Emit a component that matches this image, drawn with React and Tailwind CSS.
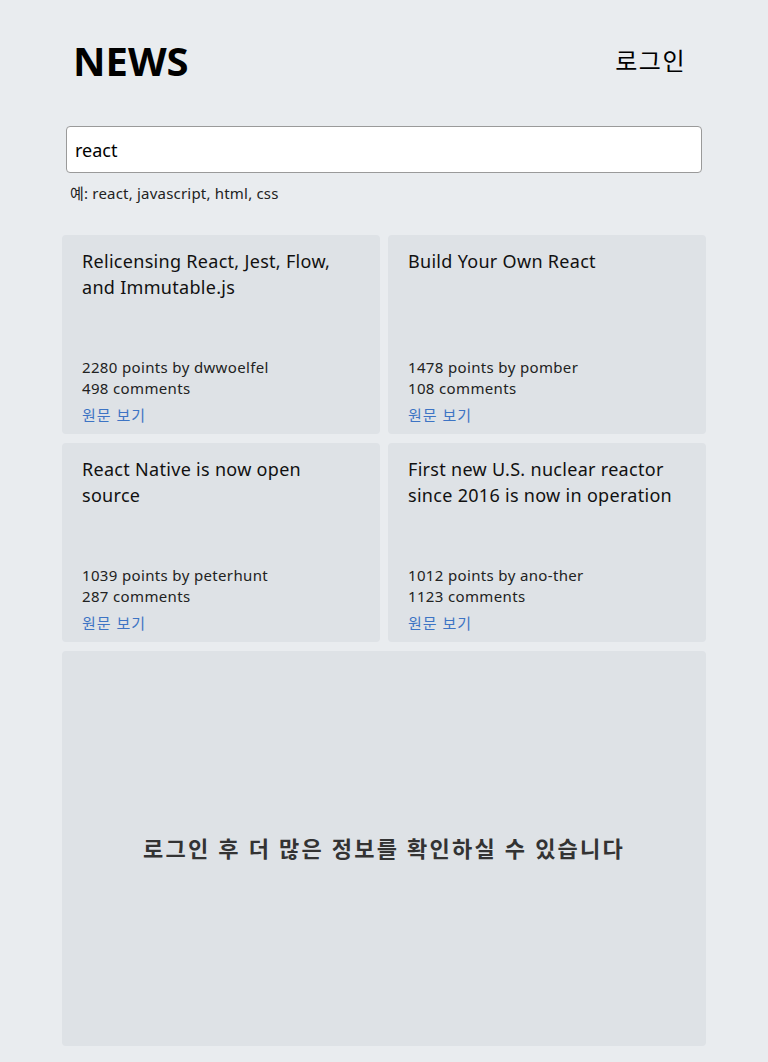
import { useState } from "react";

const articles = [
  {
    title: "Relicensing React, Jest, Flow, and Immutable.js",
    points: 2280,
    author: "dwwoelfel",
    comments: 498,
  },
  {
    title: "Build Your Own React",
    points: 1478,
    author: "pomber",
    comments: 108,
  },
  {
    title: "React Native is now open source",
    points: 1039,
    author: "peterhunt",
    comments: 287,
  },
  {
    title: "First new U.S. nuclear reactor since 2016 is now in operation",
    points: 1012,
    author: "ano-ther",
    comments: 1123,
  },
];

const font = {
  fontFamily: '"Noto Sans", "Noto Sans CJK KR", sans-serif',
};

const NewsCard = ({ item }) => (
  <div className="bg-[#dee2e6] rounded-[4px] h-[199px] px-5 pt-[13px] pb-[8px] flex flex-col justify-between">
    <h2 className="text-[18px] leading-[26px] tracking-[0.3px] text-[#111] pr-2">{item.title}</h2>
    <div className="text-[15px] leading-[21px] tracking-[0.35px] text-[#222]">
      <p>
        {item.points} points by {item.author}
      </p>
      <p>{item.comments} comments</p>
      <a href="#" className="block mt-[6px] tracking-[1px] text-[#3d74c4]">
        원문 보기
      </a>
    </div>
  </div>
);

export default function App() {
  const [query, setQuery] = useState("react");

  return (
    <div className="min-h-screen bg-[#e9ecef]" style={font}>
      <div className="max-w-[644px] mx-auto pb-[17px]">
        <header className="flex items-center justify-between pl-[11px] pr-[20px] pt-[36px] pb-[40px]">
          <h1 className="text-[40px] leading-[50px] font-bold text-black">NEWS</h1>
          <button className="text-[24px] leading-[30px] tracking-[1.5px] text-black">로그인</button>
        </header>

        <div className="px-1 mb-[32px]">
          <input
            value={query}
            onChange={(e) => setQuery(e.target.value)}
            className="w-full h-[47px] bg-white border border-[#9a9a9a] rounded-[4px] px-2 text-[18px] text-black outline-none"
          />
          <p className="mt-[10px] pl-1 text-[15px] leading-[20px] tracking-[0.2px] text-[#222]">
            예: react, javascript, html, css
          </p>
        </div>

        <div className="grid grid-cols-2 gap-x-2 gap-y-[9px]">
          {articles.map((item) => (
            <NewsCard key={item.title} item={item} />
          ))}
        </div>

        <div className="mt-[9px] bg-[#dee2e6] rounded-[4px] h-[395px] flex items-center justify-center">
          <p className="text-[22px] font-bold tracking-[2.2px] text-[#333]">
            로그인 후 더 많은 정보를 확인하실 수 있습니다
          </p>
        </div>
      </div>
    </div>
  );
}
